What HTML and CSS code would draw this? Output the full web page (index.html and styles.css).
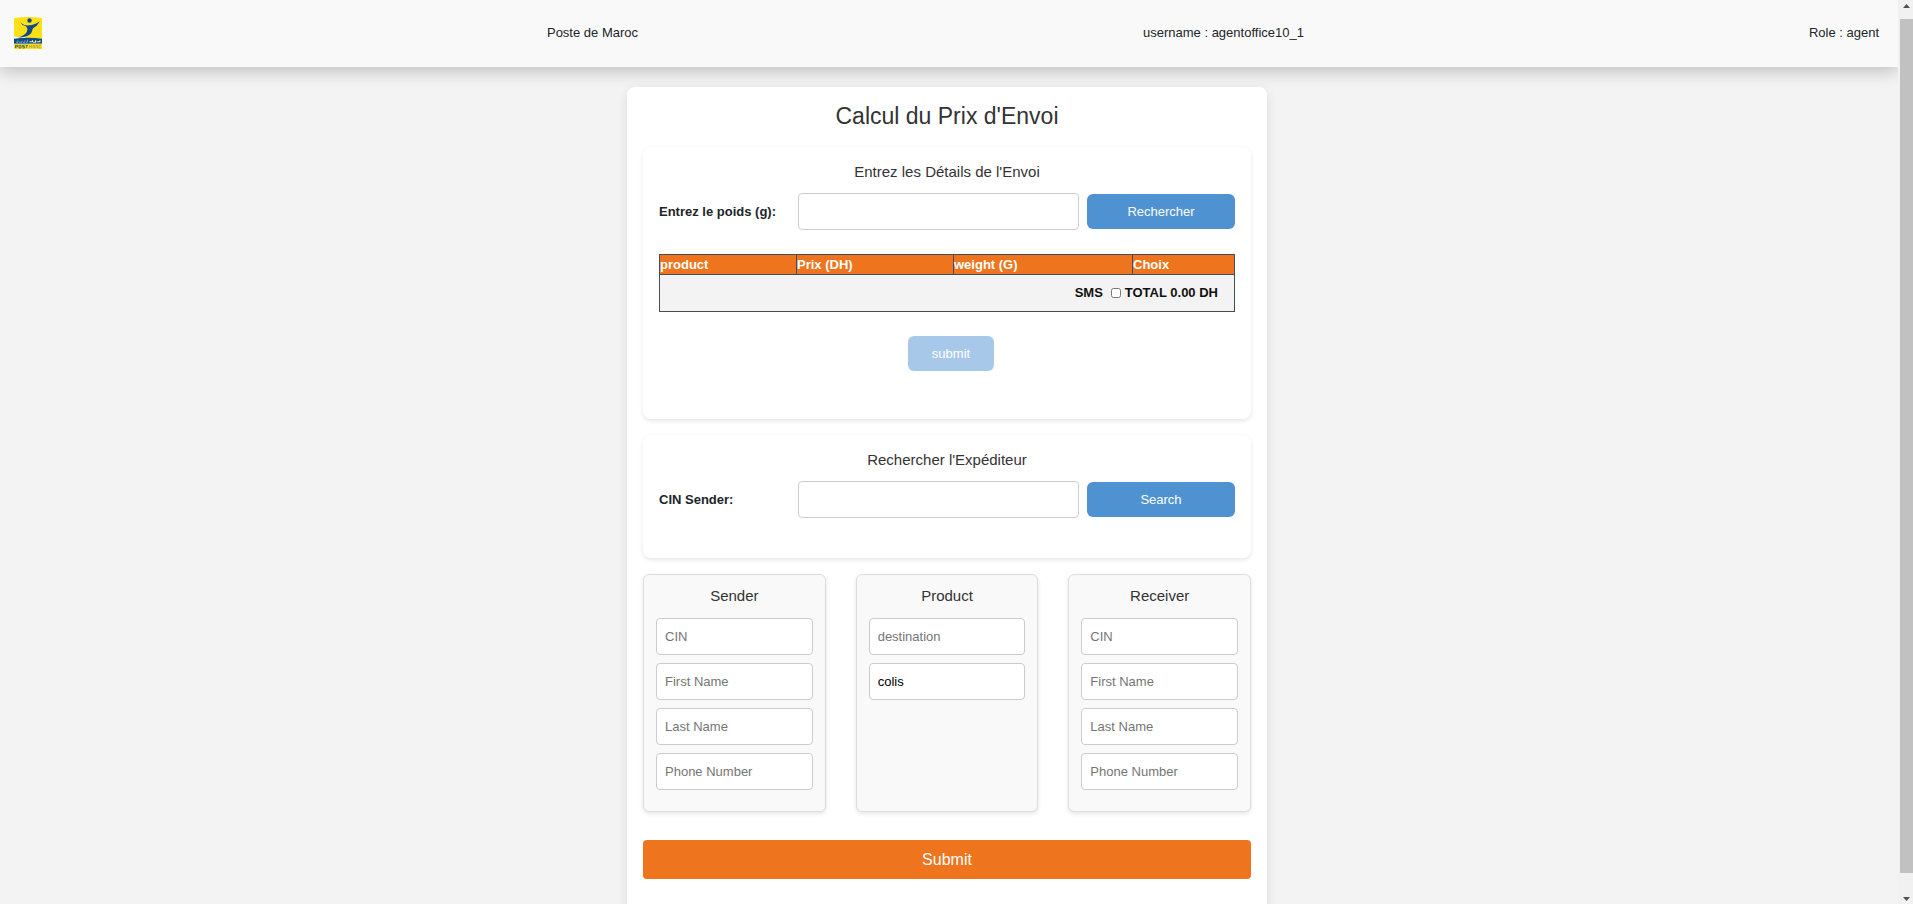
FILE: index.html
```html
<!DOCTYPE html>
<html lang="fr">
<head>
<meta charset="utf-8">
<title>Calcul du Prix d'Envoi</title>
<link rel="stylesheet" href="styles.css">
</head>
<body>
<div class="shell">
  <div class="page">
    <header class="topbar">
      <svg class="logo" viewBox="0 0 28 31" preserveAspectRatio="none" role="img" aria-label="Poste Maroc">
        <path fill="#ffe016" d="M0 0h28v22H0z"/>
        <path fill="#fff" d="M0 19Q9 21 14 17L10 21H0zM0 0H28V1Q14-1 0 1z"/>
        <circle cx="15.500" cy="3.300" r="2.200" fill="#0b4a8f"/>
        <path fill="#0b4a8f" d="M6 5Q11 9 15 8Q20 8 26 4Q23 9 19 11Q18 14 17 16Q13 20 4 20Q11 18 13 14Q14 11 12 9Q8 8 6 5z"/>
        <path fill="#0b4a8f" d="M0 21Q14 19 28 21V26H0z"/>
        <path fill="none" stroke="#a9bdb9" stroke-width=".700" d="M2 24.500h2v-2M5 24.500h3v-1.500M9 24.500h2v-2M12 24.500h1.500v-2.500"/>
        <path fill="none" stroke="#fff07a" d="M15.500 24h3v-1.500M19 24.500h2.500v-2M22.500 24h3.500v-1.500"/>
        <path fill="#ffe016" d="M0 26h28v5H0z"/>
        <path fill="none" stroke="#36537a" stroke-width=".800" d="M1.500 30v-2.500h2V29h-2M5 27.500h2V30H5zM10.500 27.500h-2v1.200h2V30h-2M11.500 27.500h2.500M12.700 27.500V30"/>
        <path fill="none" stroke="#a29a4a" stroke-width=".700" d="M15.500 30v-2.500l1 1 1-1V30M19 30v-2.500h1.500V30M22 30v-2.500h1.500V30M27 27.500h-2V30h2"/>
      </svg>
      <span>Poste de Maroc</span>
      <span>username : agentoffice10_1</span>
      <span>Role : agent</span>
    </header>
    <main class="content">
      <div class="card">
        <h1 class="title">Calcul du Prix d'Envoi</h1>
        <section class="panel">
          <h2 class="subtitle">Entrez les Détails de l'Envoi</h2>
          <form class="lookup">
            <label for="weight">Entrez le poids (g):</label>
            <input class="field" id="weight" type="text">
            <button class="btn" type="button">Rechercher</button>
          </form>
          <table class="prices">
            <thead>
              <tr><th class="c1">product</th><th class="c2">Prix (DH)</th><th class="c3">weight (G)</th><th>Choix</th></tr>
            </thead>
            <tbody>
              <tr><td colspan="4"><div class="total"><label for="sms">SMS</label><input id="sms" type="checkbox"><span>TOTAL 0.00 DH</span></div></td></tr>
            </tbody>
          </table>
          <div class="confirm"><button class="btn btn-off" type="button" disabled>submit</button></div>
        </section>
        <section class="panel">
          <h2 class="subtitle">Rechercher l'Expéditeur</h2>
          <form class="lookup">
            <label for="cin">CIN Sender:</label>
            <input class="field" id="cin" type="text">
            <button class="btn" type="button">Search</button>
          </form>
        </section>
        <form class="details">
          <div class="groups">
            <section class="group">
              <h2 class="subtitle">Sender</h2>
              <input class="field" type="text" aria-label="Sender CIN" placeholder="CIN">
              <input class="field" type="text" aria-label="Sender first name" placeholder="First Name">
              <input class="field" type="text" aria-label="Sender last name" placeholder="Last Name">
              <input class="field" type="text" aria-label="Sender phone number" placeholder="Phone Number">
            </section>
            <section class="group">
              <h2 class="subtitle">Product</h2>
              <input class="field" type="text" aria-label="Destination" placeholder="destination">
              <input class="field" type="text" aria-label="Product type" value="colis">
            </section>
            <section class="group">
              <h2 class="subtitle">Receiver</h2>
              <input class="field" type="text" aria-label="Receiver CIN" placeholder="CIN">
              <input class="field" type="text" aria-label="Receiver first name" placeholder="First Name">
              <input class="field" type="text" aria-label="Receiver last name" placeholder="Last Name">
              <input class="field" type="text" aria-label="Receiver phone number" placeholder="Phone Number">
            </section>
          </div>
          <button class="send" type="button">Submit</button>
        </form>
      </div>
    </main>
  </div>
  <div class="scrollbar" aria-hidden="true">
    <svg class="arrow" viewBox="0 0 7 4"><path d="M0 4h7L3.500 0z"/></svg>
    <div class="thumb"></div>
    <svg class="arrow" viewBox="0 0 7 4"><path d="M0 0h7L3.500 4z"/></svg>
  </div>
</div>
</body>
</html>
```
FILE: styles.css
```css
*, *::before, *::after { box-sizing: border-box; }
body {
  margin: 0;
  background: #f3f3f3;
  color: #212529;
  font: 13px/20px "Liberation Sans", Arial, sans-serif;
}
h1, h2 { margin: 0; font-weight: 400; color: #333; text-align: center; }
input, button { font: inherit; }

.shell { display: flex; height: 100vh; overflow: hidden; }
.page { flex: 1; min-width: 0; overflow: hidden; }

.topbar {
  display: flex;
  justify-content: space-between;
  align-items: center;
  padding: 17px 19px 18px 14px;
  background: #f9f9f9;
  box-shadow: 0 5px 15px rgba(0, 0, 0, .2);
}
.logo { width: 28px; height: 32px; }

.content { padding: 20px 4px 0 0; }
.card {
  width: 640px;
  max-width: 100%;
  margin: 0 auto;
  padding: 16px 16px 48px;
  background: #fff;
  border-radius: 8px;
  box-shadow: 0 4px 12px rgba(0, 0, 0, .1);
}
.title { margin-bottom: 18px; font-size: 23px; line-height: 26px; }
.subtitle { font-size: 15px; line-height: 20px; }

.panel {
  margin-bottom: 16px;
  padding: 15px 16px 40px;
  border-radius: 8px;
  box-shadow: 0 2px 4px rgba(0, 0, 0, .1);
}
.lookup {
  display: grid;
  grid-template-columns: 131px 1fr 148px;
  align-items: center;
  gap: 8px;
  margin-top: 11px;
}
.lookup label { font-weight: 700; }
.field {
  width: 100%;
  height: 37px;
  padding: 8px;
  border: 1px solid #ccc;
  border-radius: 4px;
  background: #fff;
  color: #000;
}
.field::placeholder { color: #757575; opacity: 1; }
.btn {
  height: 35px;
  padding: 0 24px;
  border: 0;
  border-radius: 6px;
  background: #4e92d2;
  color: #fff;
}
.btn-off { background: #a7c8e9; }

.prices {
  width: 100%;
  margin-top: 24px;
  border-collapse: collapse;
  table-layout: fixed;
  font-weight: 700;
  color: #111;
}
.prices th, .prices td { padding: 0; border: 1px solid #444e57; }
.prices th { background: #ee741d; color: #fff; text-align: left; line-height: 19px; }
.prices td { background: #f3f3f3; }
.c1 { width: 137px; }
.c2 { width: 157px; }
.c3 { width: 179px; }
.total {
  display: flex;
  justify-content: flex-end;
  align-items: center;
  gap: 4px;
  padding: 8px 16px;
}
.total input { width: 10px; height: 10px; margin: 0 0 0 4px; }
.confirm { padding: 24px 0 8px 8px; text-align: center; }

.groups { display: grid; grid-template-columns: repeat(3, 1fr); gap: 30px; }
.group {
  display: flex;
  flex-direction: column;
  gap: 8px;
  padding: 11px 12px 21px;
  border: 1px solid #ddd;
  border-radius: 6px;
  background: #f9f9f9;
  box-shadow: 0 2px 4px rgba(0, 0, 0, .1);
}
.group .subtitle { margin-bottom: 4px; }
.send {
  width: 100%;
  height: 39px;
  margin-top: 28px;
  border: 0;
  border-radius: 4px;
  background: #ee741d;
  color: #fff;
  font-size: 16px;
}

.scrollbar {
  display: flex;
  flex-direction: column;
  align-items: flex-end;
  gap: 11px;
  width: 15px;
  padding: 4px 0 3px;
  background: #f1f1f1;
}
.thumb { flex: 1; width: 13px; margin-bottom: 13px; background: #c1c1c1; }
.arrow { width: 7px; height: 4px; margin-right: 3px; fill: #505050; }
```
